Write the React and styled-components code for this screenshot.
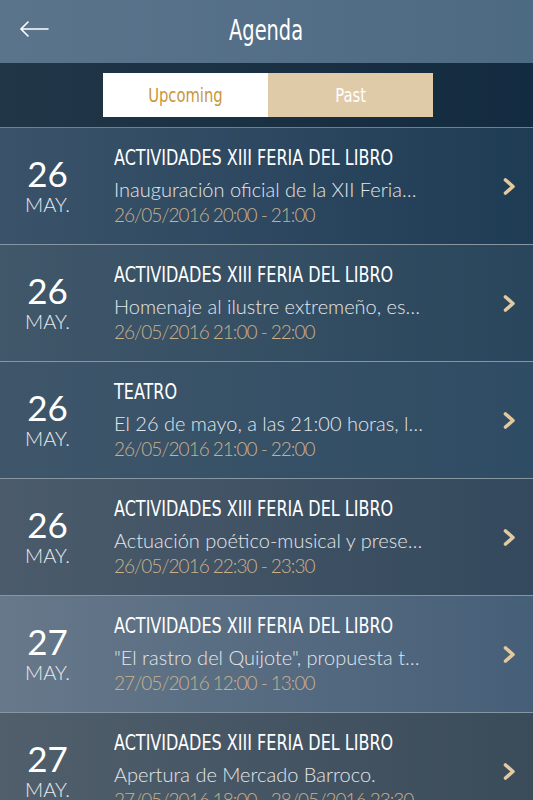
import styled, { createGlobalStyle } from 'styled-components'

const events = [
  { day: '26', month: 'MAY.', title: 'ACTIVIDADES XIII FERIA DEL LIBRO', text: 'Inauguración oficial de la XII Feria…', when: '26/05/2016 20:00 - 21:00', left: '#3a536a', right: '#1f3c55' },
  { day: '26', month: 'MAY.', title: 'ACTIVIDADES XIII FERIA DEL LIBRO', text: 'Homenaje al ilustre extremeño, es…', when: '26/05/2016 21:00 - 22:00', left: '#41576a', right: '#29465c' },
  { day: '26', month: 'MAY.', title: 'TEATRO', text: 'El 26 de mayo, a las 21:00 horas, l…', when: '26/05/2016 21:00 - 22:00', left: '#3f566a', right: '#2e4c64' },
  { day: '26', month: 'MAY.', title: 'ACTIVIDADES XIII FERIA DEL LIBRO', text: 'Actuación poético-musical y prese…', when: '26/05/2016 22:30 - 23:30', left: '#4b5b6b', right: '#34495d' },
  { day: '27', month: 'MAY.', title: 'ACTIVIDADES XIII FERIA DEL LIBRO', text: '"El rastro del Quijote", propuesta t…', when: '27/05/2016 12:00 - 13:00', left: '#67788a', right: '#465f78' },
  { day: '27', month: 'MAY.', title: 'ACTIVIDADES XIII FERIA DEL LIBRO', text: 'Apertura de Mercado Barroco.', when: '27/05/2016 18:00 - 28/05/2016 23:30', left: '#515f6c', right: '#3a4b5a' },
]

export default function App() {
  return (
    <Screen>
      <GlobalStyle />
      <Header>
        <BackButton aria-label="Back">
          <svg width="30" height="16" viewBox="0 0 30 16" fill="none" stroke="#fff" strokeWidth="1.6" strokeLinecap="round">
            <path d="M29 8H2M9 1L2 8l7 7" />
          </svg>
        </BackButton>
        <Title>Agenda</Title>
      </Header>
      <SegmentBar>
        <Segments>
          <Segment $active><Narrow>Upcoming</Narrow></Segment>
          <Segment><Narrow>Past</Narrow></Segment>
        </Segments>
      </SegmentBar>
      <List>
        {events.map((e, i) => (
          <Row key={i} $left={e.left} $right={e.right}>
            <DateBox>
              <Day>{e.day}</Day>
              <Month>{e.month}</Month>
            </DateBox>
            <Info>
              <EventTitle>{e.title}</EventTitle>
              <EventText>{e.text}</EventText>
              <EventWhen>{e.when}</EventWhen>
            </Info>
            <Chevron width="13" height="17" viewBox="0 0 13 17">
              <path d="M2.5 2L10 8.5 2.5 15" fill="none" stroke="#e3c9a0" strokeWidth="3.6" strokeLinecap="round" strokeLinejoin="round" />
            </Chevron>
          </Row>
        ))}
      </List>
    </Screen>
  )
}

const GlobalStyle = createGlobalStyle`
  body {
    margin: 0;
    background: #4a5b6a;
  }
`

const condensed = `"DejaVu Sans Condensed", "DejaVu Sans", sans-serif`
const humanist = `"Lato", "Open Sans", sans-serif`

const Screen = styled.div`
  width: 533px;
  height: 800px;
  overflow: hidden;
  display: flex;
  flex-direction: column;
`

const Header = styled.header`
  height: 63px;
  flex: none;
  display: flex;
  align-items: center;
  justify-content: center;
  position: relative;
  background: linear-gradient(to right, #5a748b, #4d6a83);
`

const BackButton = styled.button`
  position: absolute;
  left: 19px;
  top: 21px;
  padding: 0;
  border: 0;
  background: none;
  display: flex;
`

const Title = styled.h1`
  margin: 0 0 2px;
  font-family: ${condensed};
  font-stretch: condensed;
  font-weight: 400;
  font-size: 28px;
  color: #fff;
  transform: scaleX(0.77);
`

const SegmentBar = styled.div`
  height: 64px;
  flex: none;
  display: flex;
  align-items: center;
  justify-content: center;
  background: linear-gradient(to right, #213647, #132b40);
  border-bottom: 1px solid #6c8192;
`

const Segments = styled.div`
  display: flex;
  width: 330px;
  height: 44px;
  margin-left: 3px;
`

const Segment = styled.div`
  flex: 1;
  display: flex;
  align-items: center;
  justify-content: center;
  font-family: ${condensed};
  font-stretch: condensed;
  font-size: 20px;
  background: ${(p) => (p.$active ? '#ffffff' : '#e0cba9')};
  color: ${(p) => (p.$active ? '#c8963c' : '#ffffff')};
`

const Narrow = styled.span`
  display: inline-block;
  transform: scaleX(0.82);
`

const List = styled.div`
  flex: 1;
  display: flex;
  flex-direction: column;
`

const Row = styled.div`
  height: 116px;
  flex: none;
  display: flex;
  align-items: center;
  background: linear-gradient(to right, ${(p) => p.$left}, ${(p) => p.$right});
  border-bottom: 1px solid #8796a3;
`

const DateBox = styled.div`
  width: 95px;
  flex: none;
  display: flex;
  flex-direction: column;
  align-items: center;
  color: #fff;
  font-family: ${humanist};
`

const Day = styled.div`
  font-size: 35px;
  line-height: 36px;
`

const Month = styled.div`
  font-size: 20px;
  font-weight: 300;
  line-height: 26px;
  color: #e8ebee;
`

const Info = styled.div`
  flex: 1;
  min-width: 0;
  padding-left: 19px;
  margin-bottom: 4px;
  display: flex;
  flex-direction: column;
  align-items: flex-start;
`

const EventTitle = styled.div`
  font-family: ${condensed};
  font-stretch: condensed;
  font-size: 22px;
  line-height: 32px;
  color: #fff;
  white-space: nowrap;
  transform: scaleX(0.81);
  transform-origin: left center;
`

const EventText = styled.div`
  font-family: ${humanist};
  font-weight: 300;
  font-size: 20px;
  line-height: 30px;
  color: #e3e6ea;
  white-space: nowrap;
`

const EventWhen = styled.div`
  font-family: ${humanist};
  font-weight: 300;
  font-size: 19px;
  letter-spacing: -1px;
  line-height: 22px;
  color: #c9b18c;
  white-space: nowrap;
`

const Chevron = styled.svg`
  flex: none;
  margin: 0 17px 0 8px;
`
